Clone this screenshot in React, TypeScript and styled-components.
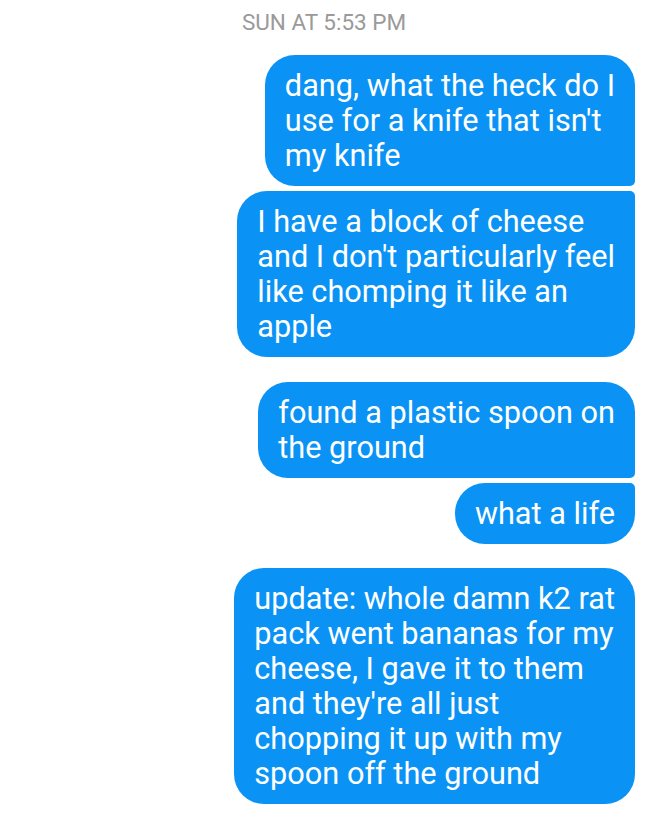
import React from "react";
import styled, { createGlobalStyle } from "styled-components";

const Global = createGlobalStyle`
  html, body { margin: 0; padding: 0; background: #ffffff; }
  body { font-family: Roboto, "Noto Sans", sans-serif; }
`;

const Page = styled.div`
  width: 648px;
  min-height: 822px;
  background: #ffffff;
  box-sizing: border-box;
  padding: 9px 13px 0 0;
  display: flex;
  flex-direction: column;
`;

const Stamp = styled.div`
  font-family: Roboto, sans-serif;
  font-size: 22.5px;
  line-height: 26px;
  color: #9a9a9a;
  text-align: center;
  width: 648px;
  margin-right: -13px;
`;

const Thread = styled.div`
  display: flex;
  flex-direction: column;
  gap: 24.5px;
  margin-top: 20px;
`;

const Group = styled.div`
  display: flex;
  flex-direction: column;
  align-items: flex-end;
  gap: 5px;
`;

type Pos = "single" | "first" | "last";

const Bubble = styled.div<{ $pos: Pos }>`
  background: #0a93f5;
  color: #ffffff;
  font-family: Roboto, sans-serif;
  font-size: 30.7px;
  line-height: 35px;
  padding: 13px 20px;
  white-space: pre;
  width: max-content;
  border-radius: ${({ $pos }) =>
    $pos === "first"
      ? "30px 30px 5px 30px"
      : $pos === "last"
      ? "30px 5px 30px 30px"
      : "30px"};
`;

const groups: string[][][] = [
  [
    ["dang, what the heck do I", "use for a knife that isn't", "my knife"],
    [
      "I have a block of cheese",
      "and I don't particularly feel",
      "like chomping it like an",
      "apple",
    ],
  ],
  [["found a plastic spoon on", "the ground"], ["what a life"]],
  [
    [
      "update: whole damn k2 rat",
      "pack went bananas for my",
      "cheese, I gave it to them",
      "and they're all just",
      "chopping it up with my",
      "spoon off the ground",
    ],
  ],
];

export default function App() {
  return (
    <>
      <Global />
      <Page>
        <Stamp>SUN AT 5:53 PM</Stamp>
        <Thread>
          {groups.map((g, gi) => (
            <Group key={gi}>
              {g.map((lines, i) => {
                const pos: Pos =
                  g.length === 1 ? "single" : i === 0 ? "first" : "last";
                return (
                  <Bubble key={i} $pos={pos}>
                    {lines.join("\n")}
                  </Bubble>
                );
              })}
            </Group>
          ))}
        </Thread>
      </Page>
    </>
  );
}
